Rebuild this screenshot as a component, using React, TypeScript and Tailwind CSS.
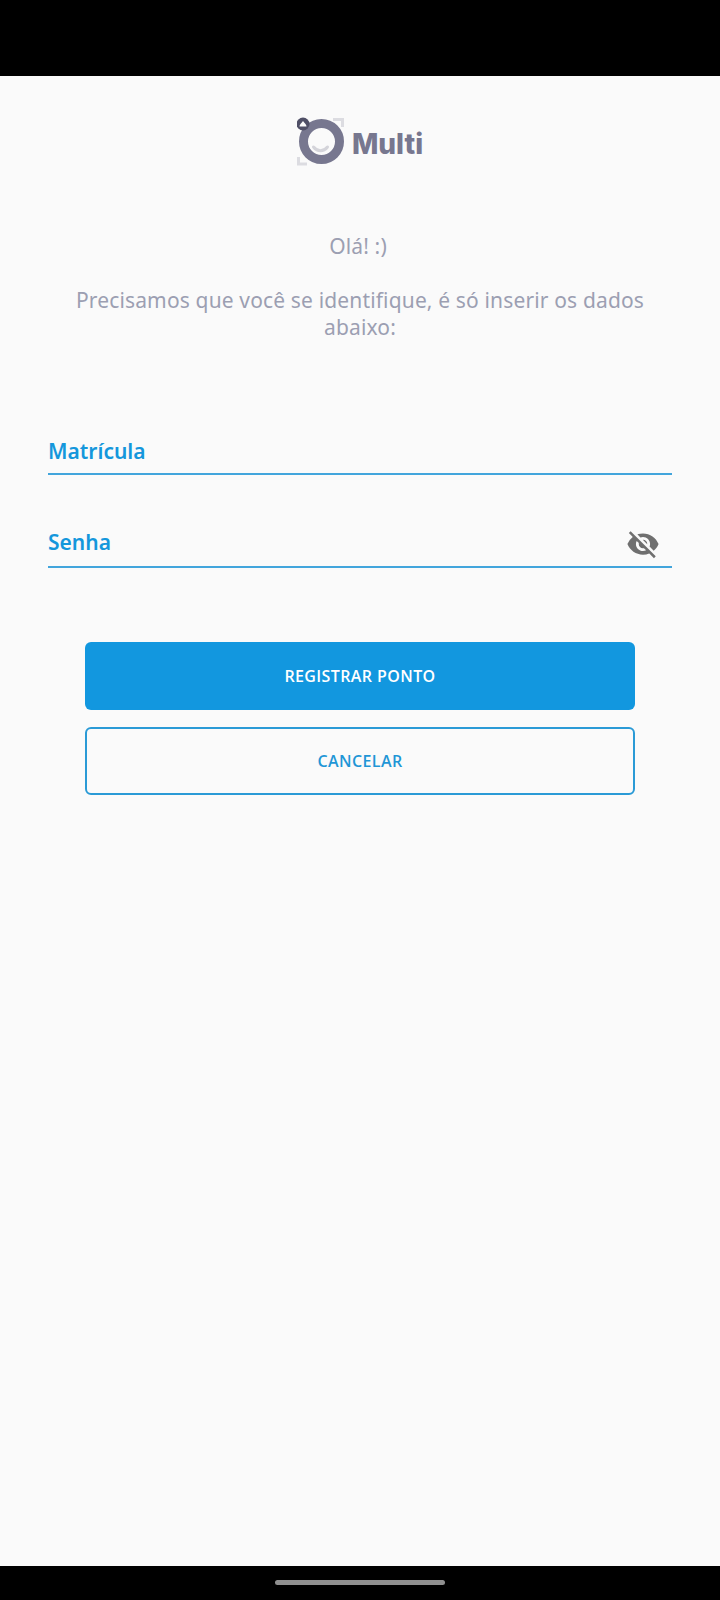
import { MdVisibilityOff } from "react-icons/md";

function Logo() {
  return (
    <div className="flex items-center justify-center gap-[7px] h-[52px]">
      <svg width="48" height="50" viewBox="0 0 48 50" fill="none">
        <path d="M36 3.5h9.5v7.5" stroke="#dcdce1" strokeWidth="3" />
        <path d="M1.5 41v7h8.5" stroke="#dcdce1" strokeWidth="3" />
        <circle cx="24.5" cy="25.5" r="18" stroke="#77778f" strokeWidth="9" />
        <path d="M16.5 31c4 5 10 5 14 0" stroke="#d4d4da" strokeWidth="3" strokeLinecap="round" />
        <circle cx="6" cy="8" r="6.5" fill="#4f4f66" />
        <path d="M2.5 10.5c0-2 1.500-3 3.500-5.500 2 2.500 3.500 3.500 3.500 5.500z" fill="#fafafa" />
      </svg>
      <span className="font-['Inter',sans-serif] font-extrabold text-[28px] leading-none text-[#77778f] mt-[5px]">Multi</span>
    </div>
  );
}

function Field({ label, icon }: { label: string; icon?: boolean }) {
  return (
    <div className={icon ? "flex items-start justify-between h-[42px] border-b-2 border-[#42a5dc]" : "flex items-start justify-between h-[40px] border-b-2 border-[#42a5dc]"}>
      <span className="font-['Noto_Sans',sans-serif] font-semibold text-[21px] leading-none text-[#1497dc] mt-[6px]">{label}</span>
      {icon && <MdVisibilityOff className="text-[#6f6f6f] mr-[12px] mt-[1px]" size={34} />}
    </div>
  );
}

export default function App() {
  return (
    <div className="w-[720px] h-[1600px] flex flex-col bg-[#fafafa] overflow-hidden">
      <div className="h-[76px] bg-black shrink-0" />
      <main className="flex-1 flex flex-col">
        <div className="mt-[39px]">
          <Logo />
        </div>
        <div className="mt-[66px] px-[64px] text-center font-['Noto_Sans',sans-serif] text-[#9c9fb2] text-[21px] tracking-[0.15px] leading-[27px]">
          <p className="pr-[4px]">Olá! :)</p>
          <p className="mt-[27px]">Precisamos que você se identifique, é só inserir os dados abaixo:</p>
        </div>
        <div className="mt-[94px] px-[48px] flex flex-col gap-[51px]">
          <Field label="Matrícula" />
          <Field label="Senha" icon />
        </div>
        <div className="mt-[74px] px-[85px] flex flex-col gap-[17px] font-['Open_Sans',sans-serif] font-semibold text-[16px] tracking-[0.4px]">
          <button className="h-[68px] rounded-[6px] bg-[#1297df] text-white">REGISTRAR PONTO</button>
          <button className="h-[68px] rounded-[6px] border-2 border-[#2a9ad6] text-[#1f96d6]">CANCELAR</button>
        </div>
      </main>
      <div className="h-[34px] bg-black shrink-0 flex justify-center pt-[14px]">
        <div className="w-[170px] h-[5px] rounded-full bg-[#8f8f8f]" />
      </div>
    </div>
  );
}
